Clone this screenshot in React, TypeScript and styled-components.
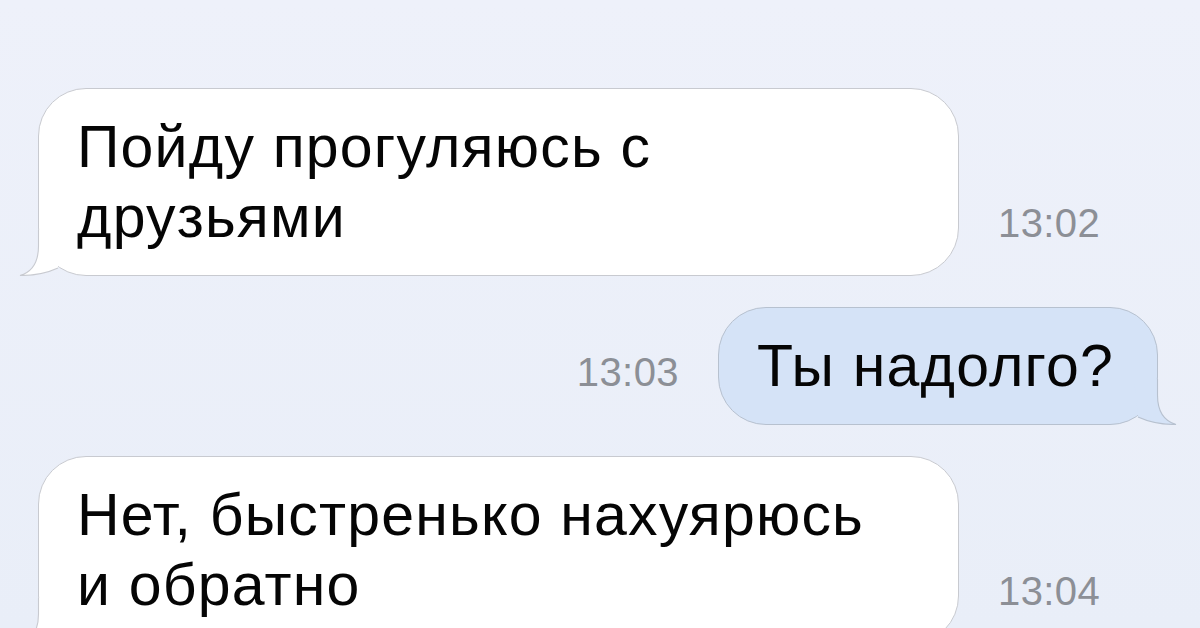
import styled, { createGlobalStyle } from 'styled-components';

const GlobalStyle = createGlobalStyle`
  html, body {
    margin: 0;
    padding: 0;
    background: #ecf0f9;
  }
  body {
    font-family: 'Liberation Sans', Arial, sans-serif;
  }
`;

const Chat = styled.div`
  width: 1200px;
  height: 628px;
  box-sizing: border-box;
  padding: 88px 42px 0 38px;
  display: flex;
  flex-direction: column;
  gap: 31px;
  overflow: hidden;
  background: linear-gradient(#eef1fa, #e9eef8);
`;

const Row = styled.div<{ $out?: boolean }>`
  display: flex;
  align-items: last baseline;
  justify-content: ${p => (p.$out ? 'flex-end' : 'flex-start')};
  gap: 39px;
`;

const Bubble = styled.div<{ $out?: boolean; $width?: number }>`
  position: relative;
  flex: none;
  box-sizing: border-box;
  width: ${p => (p.$width ? `${p.$width}px` : 'auto')};
  padding: 23px ${p => (p.$out ? '43px' : '38px')} 23px 38px;
  border-radius: 48px;
  border: 1px solid ${p => (p.$out ? '#b7c1cf' : '#c8cad0')};
  background: ${p => (p.$out ? '#d5e3f7' : '#ffffff')};
  color: #050505;
  font-size: 59px;
  line-height: 70px;
  letter-spacing: 1.2px;
`;

const Text = styled.span`
  position: relative;
  z-index: 1;
`;

const Tail = styled.svg<{ $out?: boolean }>`
  position: absolute;
  bottom: -1px;
  width: 70px;
  height: 50px;
  ${p => (p.$out ? 'right: -21px; transform: scaleX(-1);' : 'left: -21px;')}
`;

const Time = styled.span`
  flex: none;
  font-size: 40px;
  line-height: 46px;
  letter-spacing: 0.4px;
  color: #8c8f96;
`;

const tailShape = 'M 20.5 4 L 20.5 20 C 20.5 36 14 46 2 49.5 C 16 49.5 30 46.5 40 41.9';

function BubbleTail({ out }: { out?: boolean }) {
  return (
    <Tail $out={out} viewBox="0 0 70 50">
      <path d={`${tailShape} L 44 4 Z`} fill={out ? '#d5e3f7' : '#ffffff'} />
      <path d={tailShape} fill="none" stroke={out ? '#b7c1cf' : '#c8cad0'} strokeWidth="1.1" />
    </Tail>
  );
}

interface Message {
  lines: string[];
  time: string;
  out?: boolean;
}

const messages: Message[] = [
  { lines: ['Пойду прогуляюсь с', 'друзьями'], time: '13:02' },
  { lines: ['Ты надолго?'], time: '13:03', out: true },
  { lines: ['Нет, быстренько нахуярюсь', 'и обратно'], time: '13:04' },
];

export default function App() {
  return (
    <>
      <GlobalStyle />
      <Chat>
        {messages.map(m => (
          <Row key={m.time} $out={m.out}>
            {m.out && <Time>{m.time}</Time>}
            <Bubble $out={m.out} $width={m.out ? undefined : 921}>
              <Text>
                {m.lines.map((l, i) => (
                  <span key={i}>
                    {i > 0 && <br />}
                    {l}
                  </span>
                ))}
              </Text>
              <BubbleTail out={m.out} />
            </Bubble>
            {!m.out && <Time>{m.time}</Time>}
          </Row>
        ))}
      </Chat>
    </>
  );
}
